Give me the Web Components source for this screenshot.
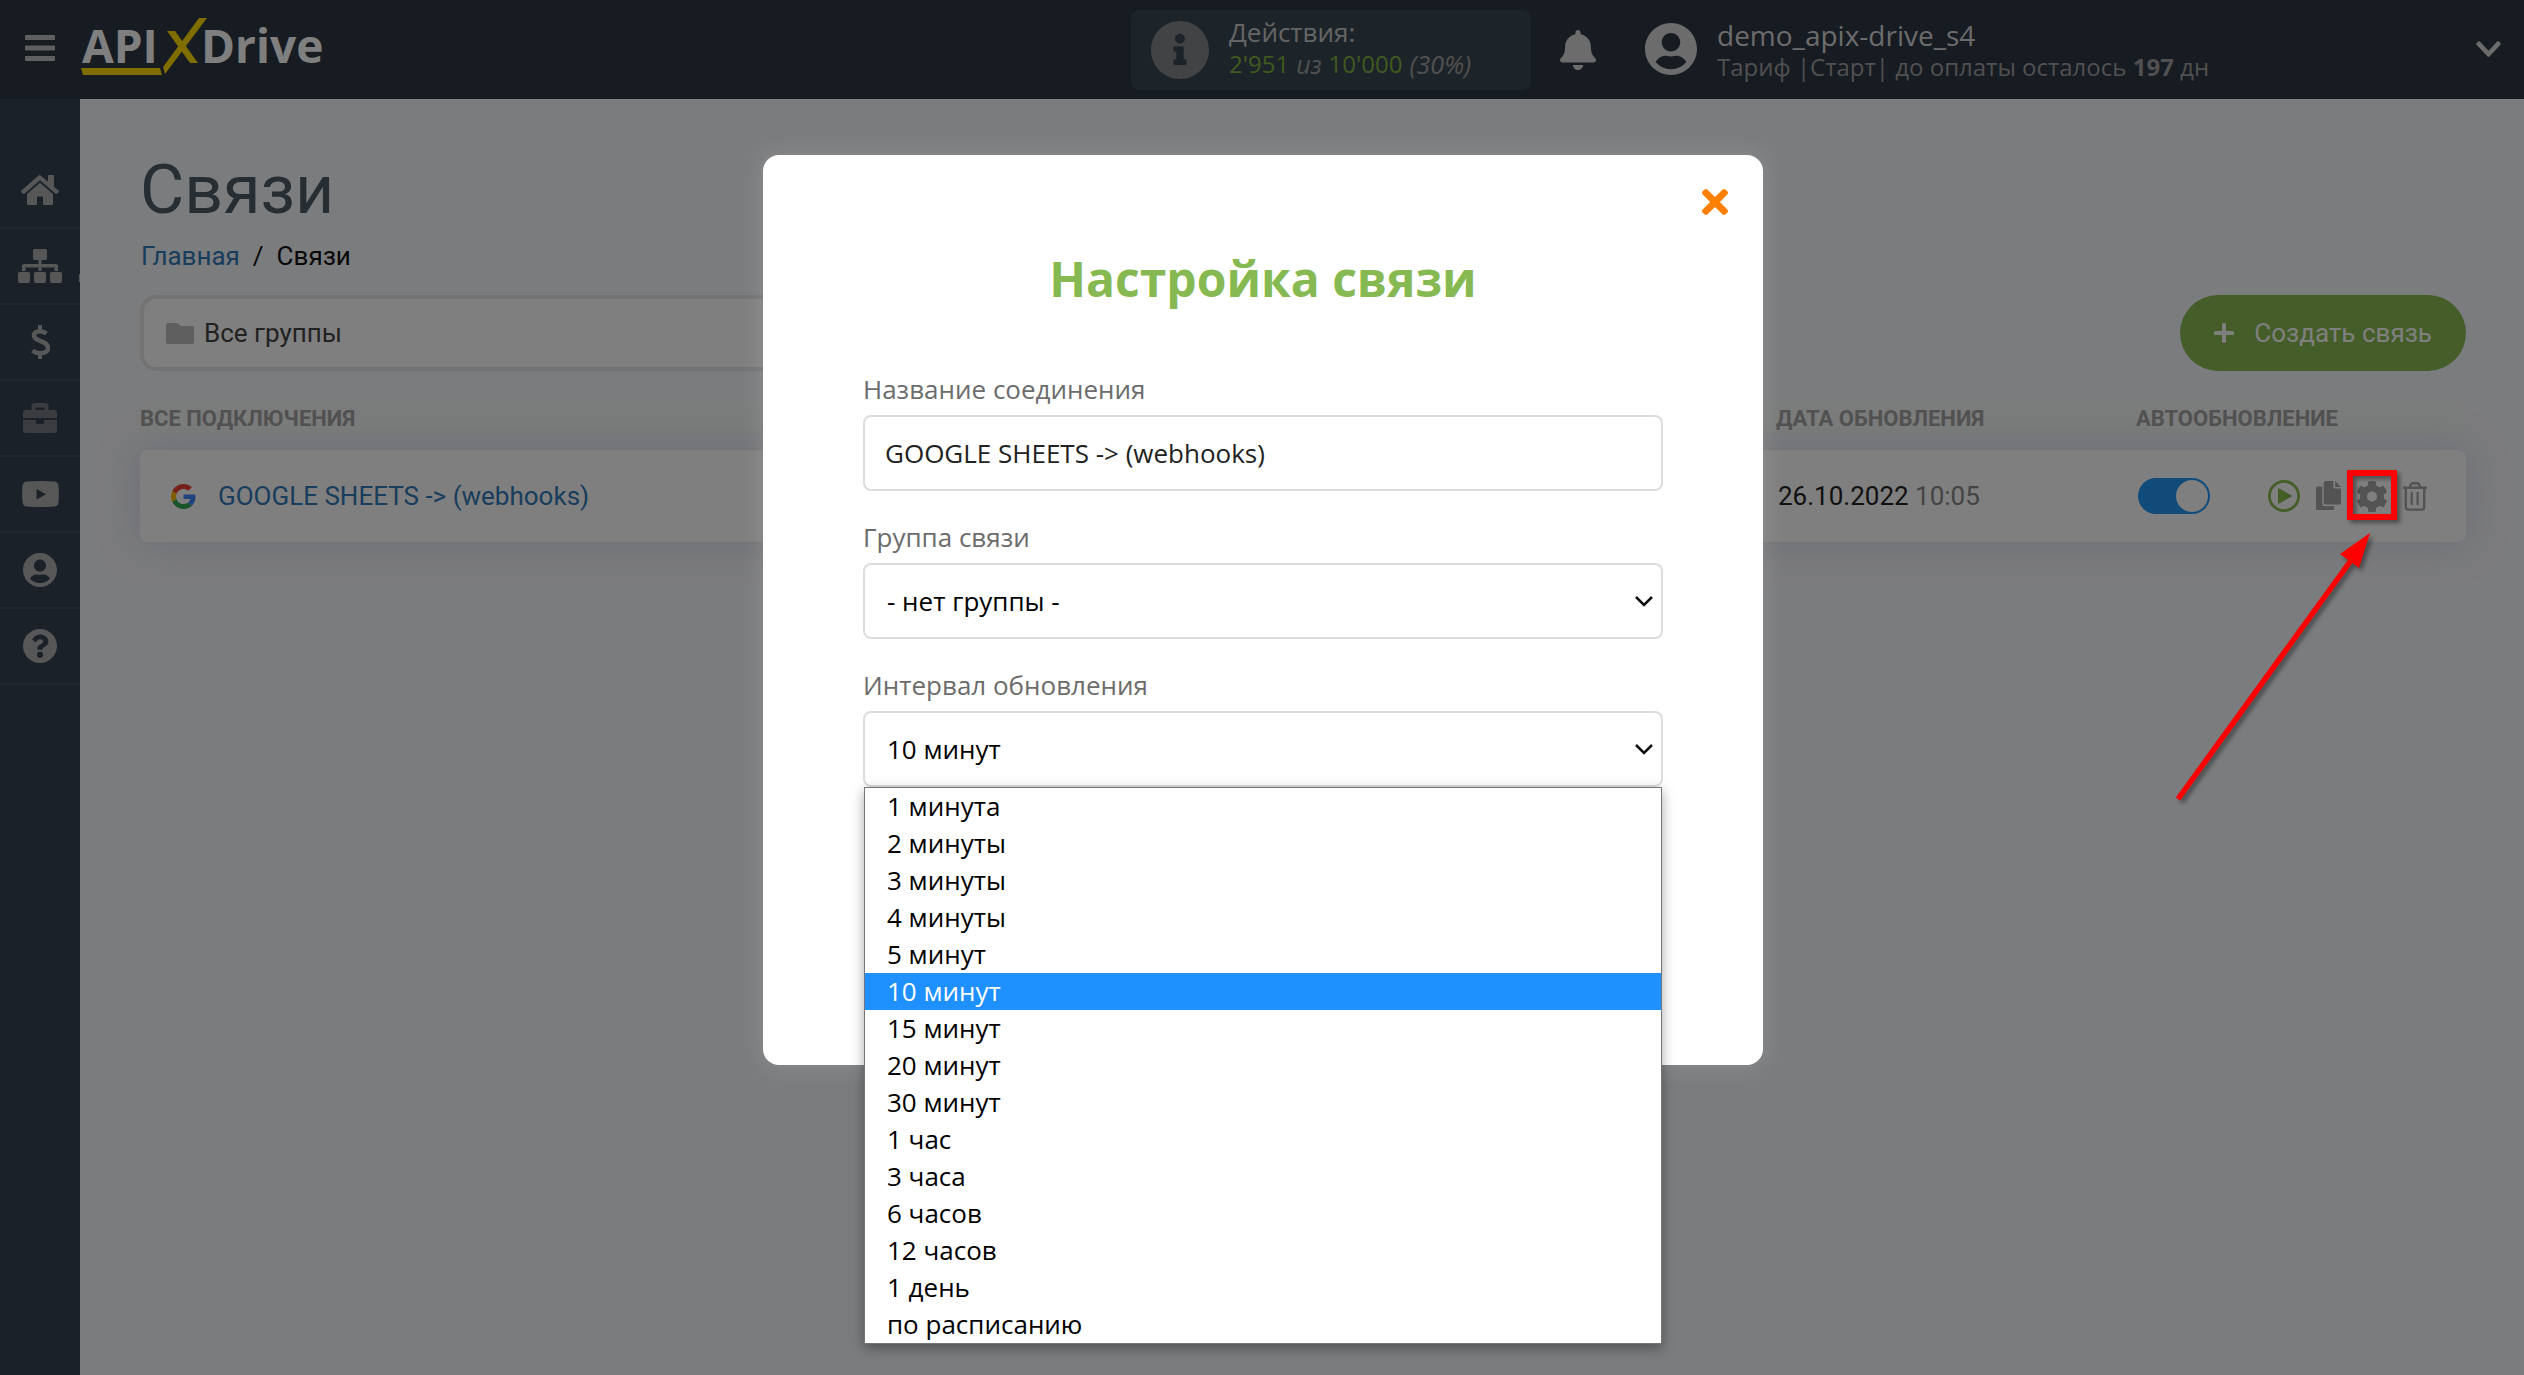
<!DOCTYPE html>
<html lang="ru">
<head>
<meta charset="utf-8">
<title>Связи — APIXDrive</title>
<style>
  html, body { margin: 0; height: 100%; }
  body { font-family: Roboto, sans-serif; background: #f7f8fc; }
</style>
</head>
<body>
<app-shell>
  <app-header slot="header"></app-header>
  <app-sidebar slot="sidebar"></app-sidebar>
  <links-page></links-page>
  <settings-modal slot="overlay"></settings-modal>
  <pointer-note slot="overlay"></pointer-note>
</app-shell>

<script>
const define = (name, html, setup) => {
  const tpl = document.createElement('template');
  tpl.innerHTML = html;
  customElements.define(name, class extends HTMLElement {
    constructor() {
      super();
      this.attachShadow({ mode: 'open' }).append(tpl.content.cloneNode(true));
      if (setup) setup(this.shadowRoot);
    }
  });
};

const ICONS = {
  burger: ['0 0 30 26', '<rect width="30" height="5" rx="1"/><rect y="10.500" width="30" height="5" rx="1"/><rect y="21" width="30" height="5" rx="1"/>'],
  home: ['0 0 38 30', '<path d="M19 0 27 6.800V1q0-1 1-1h4q1 0 1 1v11L37.600 15.600q.7.600 0 1.400l-1.600 1.800q-.6.600-1.400 0L19 5.200 3.400 18.800q-.8.600-1.400 0L.4 17q-.7-.8 0-1.400L17.600.6Q19-.6 20.400.6Z"/><path d="M19 7.800 32 19v10q0 1-1 1h-9v-8.500h-6V30H7q-1 0-1-1V19Z"/>'],
  sitemap: ['0 0 44 34', '<rect x="15" width="14" height="11" rx="2"/><rect y="23" width="12" height="11" rx="2"/><rect x="16" y="23" width="12" height="11" rx="2"/><rect x="32" y="23" width="12" height="11" rx="2"/><path d="M20.500 10h3v5H38q2 0 2 2v5h-3.500v-3.500h-13V22h-3v-3.500h-13V22H4v-5q0-2 2-2h14.500Z"/>'],
  dollar: ['0 0 20 34', '<path d="M16.500 8.500C14.500 7 12.500 6.300 10 6.300c-3.800 0-6 1.700-6 4.300 0 6.400 14 4 14 12.700 0 3-3 4.900-7.500 4.900-3.200 0-5.700-.9-8-2.700" fill="none" stroke="currentColor" stroke-width="4.600"/><path d="M8 0h4v6H8ZM8 28h4v6H8Z"/>'],
  briefcase: ['0 0 34 30', '<path fill-rule="evenodd" d="M8.500 7V3q0-3 3-3h11q3 0 3 3v4H31q3 0 3 3v5H0v-5q0-3 3-3Zm4 0h9V4.500h-9ZM0 17h13v3q0 1 1 1h6q1 0 1-1v-3h13v10q0 3-3 3H3q-3 0-3-3Z"/>'],
  video: ['0 0 37 26', '<path fill-rule="evenodd" d="M5 .5Q18.500-.5 32 .5q4 0 4.500 4.500.8 8 0 16-.5 4.500-4.500 4.500-13.500 1-27 0-4 0-4.500-4.500-.8-8 0-16Q1 .5 5 .5ZM14.500 8v10.500l9.500-5.300Z"/>'],
  user: ['0 8 496 496', '<path d="M248 8C111 8 0 119 0 256s111 248 248 248 248-111 248-248S385 8 248 8zm0 96c48.600 0 88 39.400 88 88s-39.400 88-88 88-88-39.400-88-88 39.400-88 88-88zm0 344c-58.700 0-111.300-26.600-146.500-68.200 18.800-35.400 55.600-59.800 98.500-59.800 2.400 0 4.800.4 7.100 1.100 13 4.200 26.600 6.900 40.900 6.900 14.300 0 28-2.700 40.900-6.900 2.300-.7 4.700-1.100 7.100-1.100 42.900 0 79.700 24.400 98.500 59.800C359.300 421.400 306.700 448 248 448z"/>'],
  help: ['8 8 496 496', '<path d="M504 256c0 136.997-111.043 248-248 248S8 392.997 8 256C8 119.083 119.043 8 256 8s248 111.083 248 248zM262.655 90c-54.497 0-89.255 22.957-116.549 63.758-3.536 5.286-2.353 12.415 2.715 16.258l34.699 26.310c5.205 3.947 12.621 3.008 16.665-2.122 17.864-22.658 30.113-35.797 57.303-35.797 20.429 0 45.698 13.148 45.698 32.958 0 14.976-12.363 22.667-32.534 33.976C247.128 238.528 216 254.941 216 296v4c0 6.627 5.373 12 12 12h56c6.627 0 12-5.373 12-12v-1.333c0-28.462 83.186-29.647 83.186-106.667 0-58.002-60.165-102-116.531-102zM256 338c-25.365 0-46 20.635-46 46 0 25.364 20.635 46 46 46s46-20.636 46-46c0-25.365-20.635-46-46-46z"/>'],
  info: ['8 8 496 496', '<path d="M256 8C119.043 8 8 119.083 8 256c0 136.997 111.043 248 248 248s248-111.003 248-248C504 119.083 392.957 8 256 8zm0 110c23.196 0 42 18.804 42 42s-18.804 42-42 42-42-18.804-42-42 18.804-42 42-42zm56 254c0 6.627-5.373 12-12 12h-88c-6.627 0-12-5.373-12-12v-24c0-6.627 5.373-12 12-12h12v-64h-12c-6.627 0-12-5.373-12-12v-24c0-6.627 5.373-12 12-12h64c6.627 0 12 5.373 12 12v100h12c6.627 0 12 5.373 12 12v24z"/>'],
  bell: ['0 0 448 512', '<path d="M224 512c35.320 0 63.970-28.650 63.970-64H160.030c0 35.350 28.650 64 63.970 64zm215.390-149.710c-19.320-20.760-55.470-51.990-55.470-154.290 0-77.700-54.480-139.900-127.940-155.160V32c0-17.670-14.320-32-31.980-32s-31.980 14.330-31.980 32v20.840C118.560 68.100 64.080 130.300 64.080 208c0 102.300-36.150 133.530-55.470 154.290-6 6.450-8.660 14.160-8.610 21.710.11 16.400 12.980 32 32.100 32h383.800c19.120 0 32-15.600 32.100-32 .05-7.550-2.610-15.270-8.610-21.710z"/>'],
  chevron: ['0 120 448 272', '<path d="M207.029 381.476L12.686 187.132c-9.373-9.373-9.373-24.569 0-33.941l22.667-22.667c9.357-9.357 24.522-9.375 33.901-.04L224 284.505l154.745-154.021c9.379-9.335 24.544-9.317 33.901.04l22.667 22.667c9.373 9.373 9.373 24.569 0 33.941L240.971 381.476c-9.373 9.372-24.569 9.372-33.942 0z"/>'],
  close: ['0 80 352 352', '<path d="M242.720 256l100.070-100.070c12.280-12.280 12.280-32.190 0-44.480l-22.240-22.240c-12.280-12.280-32.190-12.280-44.480 0L176 189.280 75.930 89.210c-12.280-12.280-32.190-12.280-44.480 0L9.210 111.450c-12.280 12.280-12.280 32.190 0 44.480L109.280 256 9.210 356.070c-12.280 12.280-12.280 32.190 0 44.480l22.240 22.240c12.280 12.280 32.200 12.280 44.480 0L176 322.720l100.070 100.070c12.280 12.280 32.200 12.280 44.480 0l22.240-22.240c12.280-12.280 12.280-32.190 0-44.480L242.720 256z"/>'],
  folder: ['0 0 28 21', '<path d="M2 0h9q1 0 1.600.8L15 3h11q2 0 2 2v14q0 2-2 2H2q-2 0-2-2V2Q0 0 2 0Z"/>'],
  plus: ['0 0 20 20', '<path d="M8 1.500Q8 0 9.500 0h1Q12 0 12 1.500V8h6.500Q20 8 20 9.500v1q0 1.500-1.500 1.500H12v6.500q0 1.500-1.500 1.500h-1Q8 20 8 18.500V12H1.500Q0 12 0 10.500v-1Q0 8 1.500 8H8Z"/>'],
  google: ['0 0 48 48', '<path fill="#ea4335" d="M24 9.500c3.540 0 6.710 1.220 9.210 3.600l6.850-6.850C35.900 2.380 30.470 0 24 0 14.620 0 6.510 5.380 2.560 13.220l7.980 6.190C12.430 13.720 17.740 9.500 24 9.500z"/><path fill="#4285f4" d="M46.980 24.550c0-1.570-.15-3.090-.38-4.550H24v9.020h12.940c-.58 2.960-2.260 5.480-4.780 7.180l7.730 6c4.510-4.180 7.090-10.360 7.090-17.650z"/><path fill="#fbbc05" d="M10.530 28.590c-.48-1.450-.76-2.990-.76-4.590s.27-3.140.76-4.590l-7.980-6.190C.92 16.460 0 20.120 0 24c0 3.880.92 7.540 2.560 10.780l7.970-6.190z"/><path fill="#34a853" d="M24 48c6.480 0 11.930-2.130 15.890-5.810l-7.730-6c-2.150 1.450-4.920 2.300-8.160 2.300-6.260 0-11.570-4.220-13.470-9.910l-7.980 6.190C6.510 42.620 14.620 48 24 48z"/>'],
  play: ['0 0 32 32', '<circle cx="16" cy="16" r="14.600" fill="none" stroke="currentColor" stroke-width="2.800"/><path d="M10 7.700 24.500 16 10 24.300Z"/>'],
  copy: ['0 0 26 30', '<path d="M8.500 1q0-1 1-1H18v6q0 1.500 1.500 1.500H26V22q0 1.500-1.500 1.500h-15q-1.500 0-1.500-1.500V1Z"/><path d="M20 0 26 6h-6ZM6.500 5.500V23q0 2.200 2.200 2.200H19v2.300q0 1.500-1.500 1.500h-16Q0 29 0 27.500V7q0-1.500 1.500-1.500Z"/>'],
  cog: ['16 8 480 496', '<path d="M487.400 315.700l-42.600-24.600c4.300-23.200 4.300-47 0-70.200l42.600-24.600c4.900-2.800 7.100-8.600 5.500-14-11.100-35.600-30-67.800-54.700-94.600-3.800-4.100-10-5.100-14.800-2.300L380.800 110c-17.900-15.400-38.500-27.300-60.800-35.100V25.800c0-5.600-3.900-10.500-9.400-11.700-36.700-8.200-74.300-7.800-109.200 0-5.500 1.200-9.400 6.100-9.400 11.700V75c-22.200 7.900-42.800 19.800-60.800 35.100L88.700 85.500c-4.900-2.800-11-1.900-14.800 2.300-24.700 26.700-43.600 58.900-54.700 94.600-1.700 5.400.6 11.200 5.500 14L67.300 221c-4.300 23.200-4.300 47 0 70.200l-42.600 24.600c-4.900 2.800-7.100 8.600-5.500 14 11.100 35.600 30 67.800 54.700 94.600 3.800 4.100 10 5.100 14.800 2.300l42.600-24.600c17.900 15.400 38.500 27.300 60.800 35.100v49.200c0 5.600 3.900 10.500 9.400 11.700 36.700 8.200 74.300 7.800 109.200 0 5.500-1.200 9.400-6.100 9.400-11.700v-49.200c22.200-7.900 42.800-19.800 60.800-35.100l42.600 24.600c4.900 2.800 11 1.900 14.800-2.300 24.700-26.700 43.600-58.900 54.700-94.600 1.500-5.500-.7-11.300-5.600-14.100zM256 336c-44.100 0-80-35.900-80-80s35.900-80 80-80 80 35.900 80 80-35.900 80-80 80z"/>'],
  trash: ['0 0 24 29', '<path fill="none" stroke="currentColor" stroke-width="2.400" d="M2.800 6v19.300q0 2.300 2.300 2.300h13.800q2.300 0 2.300-2.300V6M6.500 5.500 8 2.200q.5-1 1.600-1h4.800q1.100 0 1.600 1l1.500 3.300"/><path d="M0 4.600h24V7H0ZM7.600 10H9.800v13H7.600ZM13.500 10h2.200v13h-2.200Z"/>'],
};

customElements.define('ui-icon', class extends HTMLElement {
  constructor() {
    super();
    this.attachShadow({ mode: 'open' });
  }
  connectedCallback() {
    const [box, body] = ICONS[this.getAttribute('name')];
    this.shadowRoot.innerHTML = `
      <style>:host{display:block;flex:none} svg{display:block;width:100%;height:100%;fill:currentColor}</style>
      <svg viewBox="${box}" preserveAspectRatio="none" aria-hidden="true">${body}</svg>`;
  }
});

define('app-shell', `
  <style>
    :host { display: grid; grid-template: auto 1fr / 80px minmax(0, 1fr); min-height: 100vh; position: relative; overflow: hidden; }
    header { grid-column: 1 / -1; }
    aside { display: grid; background: #374251; }
  </style>
  <header><slot name="header"></slot></header>
  <aside><slot name="sidebar"></slot></aside>
  <main><slot></slot></main>
  <slot name="overlay"></slot>
`);

define('brand-logo', `
  <style>
    :host { display: block; }
    a { display: block; }
    svg { display: block; width: 250px; height: 74px; overflow: visible; }
    text { font: 700 46px "Open Sans", sans-serif; fill: #fff; }
    polygon { fill: #ffdb00; }
  </style>
  <a href="#" aria-label="APIXDrive">
    <svg viewBox="80 8 250 74">
      <text x="82" y="63">API</text>
      <text x="201" y="63">Drive</text>
      <polygon points="167,31 175,31 198,63 190,63"/>
      <polygon points="199,18 207,18 165,74 163,67"/>
      <polygon points="81,68 160,68 162,75 83,75"/>
    </svg>
  </a>
`);

define('app-header', `
  <style>
    :host { display: grid; grid-template-columns: minmax(0, 1131fr) minmax(0, 1393fr); height: 99px; background: #2e3644; color: #fff; font-family: "Open Sans", sans-serif; }
    button { all: unset; cursor: pointer; }
    .left { display: flex; align-items: center; gap: 25px; padding-left: 25px; }
    .burger { width: 30px; height: 26px; margin-bottom: 3px; color: #bebebe; }
    brand-logo { margin-bottom: 9px; }
    .right { display: flex; align-items: center; padding-right: 23px; white-space: nowrap; }
    .limits { display: flex; align-items: center; gap: 20px; box-sizing: border-box; width: 400px; height: 80px; padding: 0 20px; border-radius: 8px; background: #3b4853; color: #c9c9c9; }
    .limits ui-icon { width: 58px; height: 58px; color: #83868a; }
    .limits div { padding-bottom: 4px; }
    .limits p { margin: 0; line-height: 32px; }
    .title { font-size: 26px; }
    .usage { display: flex; gap: 7px; font-size: 24px; color: #a0a0a0; }
    .usage i { font-size: 25px; }
    .usage b { font-weight: 400; color: #7fb241; }
    .bell { margin-left: 29px; width: 36px; height: 40px; color: #d8d8d8; }
    .account { display: flex; align-items: center; flex: 1; margin-left: 49px; gap: 20px; color: #d8d8d8; }
    .avatar { width: 52px; height: 52px; margin-bottom: 2px; }
    .who { flex: 1; padding-top: 2px; line-height: 32px; }
    .login { font-size: 28px; }
    .plan { font-size: 24px; color: #a0a0a0; }
    .arrow { width: 25px; height: 16px; margin-bottom: 2px; }
  </style>
  <div class="left">
    <button aria-label="Меню"><ui-icon class="burger" name="burger"></ui-icon></button>
    <brand-logo></brand-logo>
  </div>
  <div class="right">
    <div class="limits">
      <ui-icon name="info"></ui-icon>
      <div>
        <p class="title">Действия:</p>
        <p class="usage"><b>2'951</b> <i>из</i> <b>10'000</b> <i>(30%)</i></p>
      </div>
    </div>
    <button aria-label="Уведомления"><ui-icon class="bell" name="bell"></ui-icon></button>
    <div class="account">
      <ui-icon class="avatar" name="user"></ui-icon>
      <div class="who">
        <div class="login">demo_apix-drive_s4</div>
        <div class="plan">Тариф |Старт| до оплаты осталось <strong>197</strong> дн</div>
      </div>
      <button aria-label="Профиль"><ui-icon class="arrow" name="chevron"></ui-icon></button>
    </div>
  </div>
`);

define('app-sidebar', `
  <style>
    :host { display: block; padding-top: 54px; color: #aeafb1; }
    a { display: grid; place-items: center; height: 74px; border-bottom: 2px solid #454a5a; color: inherit; position: relative; }
    .dim { color: #74787e; }
    .current::after { content: ""; position: absolute; right: 0; top: 45px; width: 1px; height: 8px; background: #b0b1b3; }
  </style>
  <nav>
    <a href="#" aria-label="Главная"><ui-icon name="home" style="width:38px;height:30px"></ui-icon></a>
    <a href="#" aria-label="Связи" class="current"><ui-icon name="sitemap" style="width:44px;height:34px"></ui-icon></a>
    <a href="#" aria-label="Оплата"><ui-icon name="dollar" style="width:20px;height:34px"></ui-icon></a>
    <a href="#" aria-label="Проекты" class="dim"><ui-icon name="briefcase" style="width:34px;height:30px"></ui-icon></a>
    <a href="#" aria-label="Видео"><ui-icon name="video" style="width:37px;height:26px"></ui-icon></a>
    <a href="#" aria-label="Профиль"><ui-icon name="user" style="width:34px;height:34px"></ui-icon></a>
    <a href="#" aria-label="Помощь"><ui-icon name="help" style="width:34px;height:34px"></ui-icon></a>
  </nav>
`);

define('toggle-switch', `
  <style>
    :host { display: block; padding-left: 2px; }
    input { appearance: none; display: block; margin: 0; width: 72px; height: 36px; border-radius: 18px; padding: 2px; background: #2196f3; box-sizing: border-box; }
    input::before { content: ""; display: block; width: 32px; height: 32px; border-radius: 50%; background: #fff; margin-left: auto; }
  </style>
  <input type="checkbox" role="switch" checked aria-label="Автообновление">
`);

define('links-page', `
  <style>
    :host { display: block; padding: 51px 58px 0 60px; font-size: 26px; line-height: 30px; color: #222; }
    h1 { margin: 0; font-weight: 400; font-size: 68px; line-height: 80px; color: #4d5c66; }
    a { color: #337ab7; text-decoration: none; }
    button { all: unset; cursor: pointer; display: block; }
    .crumbs { display: flex; gap: 13px; margin-top: 11px; padding-left: 1px; color: #111; }
    .toolbar { display: flex; justify-content: space-between; margin-top: 24px; }
    .group { display: flex; align-items: center; gap: 10px; box-sizing: border-box; width: 30%; height: 76px; padding: 0 22px; background: #fff; border: 4px solid #e6e6e6; border-radius: 16px; color: #444; }
    .group ui-icon { width: 28px; height: 21px; color: #bebebe; }
    .create { display: flex; align-items: center; gap: 20px; height: 76px; padding: 0 34px; border-radius: 38px; background: #8aba52; color: #fff; }
    .create ui-icon { width: 20px; height: 20px; }
    table { width: 100%; margin-top: 33px; border-collapse: separate; border-spacing: 0; table-layout: fixed; }
    th { padding: 0; height: 30px; text-align: left; font-weight: 700; font-size: 22px; line-height: 30px; color: #a3a3a3; background: #f6f8f7; }
    .gap td { height: 16px; padding: 0; }
    .row { border-radius: 8px; box-shadow: 0 0 40px rgba(160, 165, 190, .35); }
    .row td { height: 92px; padding: 0; background: #fff; }
    .row td:first-child { border-radius: 8px 0 0 8px; }
    .row td:last-child { border-radius: 0 8px 8px 0; }
    .name { display: flex; align-items: center; gap: 22px; padding-left: 31px; }
    .name ui-icon { width: 25px; height: 25px; }
    .date { color: #222; padding-left: 2px; }
    .date span { color: #888; }
    .actions { display: flex; align-items: center; gap: 16px; color: #a6a6a6; }
    .play { color: #8aba52; }
  </style>
  <h1>Связи</h1>
  <nav class="crumbs"><a href="#">Главная</a><span>/</span><span>Связи</span></nav>
  <div class="toolbar">
    <button class="group"><ui-icon name="folder"></ui-icon><span>Все группы</span></button>
    <button class="create"><ui-icon name="plus"></ui-icon><span>Создать связь</span></button>
  </div>
  <table>
    <colgroup><col><col style="width:360px"><col style="width:132px"><col style="width:198px"></colgroup>
    <thead><tr><th>ВСЕ ПОДКЛЮЧЕНИЯ</th><th>ДАТА ОБНОВЛЕНИЯ</th><th colspan="2">АВТООБНОВЛЕНИЕ</th></tr></thead>
    <tbody>
      <tr class="gap"><td colspan="4"></td></tr>
      <tr class="row">
        <td><div class="name"><ui-icon name="google"></ui-icon><a href="#">GOOGLE SHEETS -&gt; (webhooks)</a></div></td>
        <td><div class="date">26.10.2022 <span>10:05</span></div></td>
        <td><toggle-switch></toggle-switch></td>
        <td><div class="actions">
          <button class="play" aria-label="Запустить"><ui-icon name="play" style="width:32px;height:32px"></ui-icon></button>
          <button aria-label="Копировать"><ui-icon name="copy" style="width:25px;height:30px"></ui-icon></button>
          <button aria-label="Настройки"><ui-icon name="cog" style="width:30px;height:31px"></ui-icon></button>
          <button aria-label="Удалить"><ui-icon name="trash" style="width:24px;height:29px"></ui-icon></button>
        </div></td>
      </tr>
    </tbody>
  </table>
`);

define('form-field', `
  <style>
    :host { display: block; position: relative; }
    :host(:not(:last-child)) { margin-bottom: 28px; }
    ::slotted(label) { display: block; margin-bottom: 8px; line-height: 36px; color: #6c6c6c; }
    .box { position: relative; }
    ::slotted(input), ::slotted(select) { display: block; box-sizing: border-box; width: 100%; height: 76px; border: 2px solid #dcdcdc; border-radius: 8px; background: #fff; font: inherit; color: #222; outline: 0; appearance: none; }
    ::slotted(input) { padding: 0 20px; }
    ::slotted(select) { padding: 0 22px; color: #000; }
    svg { display: none; position: absolute; right: 9px; top: 32px; width: 20px; height: 12px; pointer-events: none; }
    :host([dropdown]) svg { display: block; }
  </style>
  <slot name="label"></slot>
  <div class="box">
    <slot></slot>
    <svg viewBox="0 0 20 12"><path d="M2 2l8 8 8-8" fill="none" stroke="#111" stroke-width="2.500"/></svg>
  </div>
`);

define('option-list', `
  <style>
    :host { display: block; position: absolute; z-index: 2; top: 100%; left: 1px; right: 1px; background: #fff; border: 1px solid #767676; box-shadow: 0 4px 12px rgba(0, 0, 0, .35); }
    ul { list-style: none; margin: 0; padding: 0; }
    li { height: 37px; line-height: 36px; padding: 0 22px; color: #000; }
    li[aria-selected="true"] { background: #1e90ff; color: #fff; }
  </style>
  <ul role="listbox" aria-label="Интервал обновления"></ul>
`);

const INTERVALS = ['1 минута', '2 минуты', '3 минуты', '4 минуты', '5 минут', '10 минут', '15 минут', '20 минут', '30 минут', '1 час', '3 часа', '6 часов', '12 часов', '1 день', 'по расписанию'];

define('settings-modal', `
  <style>
    :host { display: flex; justify-content: center; align-items: flex-start; position: absolute; inset: 0; z-index: 5; padding: 155px 0 0 2px; background: rgba(0, 0, 0, .5); font: 26px "Open Sans", sans-serif; }
    section { position: relative; box-sizing: border-box; width: 1000px; max-width: 100%; min-height: 910px; padding: 91px 100px 100px; border-radius: 16px; background: #fff; box-shadow: 0 0 24px rgba(255, 255, 255, .15); }
    h2 { margin: 0 0 60px; text-align: center; font-size: 48px; line-height: 65px; font-weight: 700; color: #86b951; }
    button { all: unset; cursor: pointer; position: absolute; top: 34px; right: 35px; color: #ff8000; }
    button ui-icon { width: 26px; height: 26px; }
  </style>
  <section role="dialog" aria-labelledby="title">
    <button aria-label="Закрыть"><ui-icon name="close"></ui-icon></button>
    <h2 id="title">Настройка связи</h2>
    <form-field>
      <label slot="label" for="name">Название соединения</label>
      <input id="name" value="GOOGLE SHEETS -&gt; (webhooks)">
    </form-field>
    <form-field dropdown>
      <label slot="label" for="group">Группа связи</label>
      <select id="group"><option>- нет группы -</option></select>
    </form-field>
    <form-field dropdown>
      <label slot="label" for="interval">Интервал обновления</label>
      <select id="interval"></select>
      <option-list></option-list>
    </form-field>
  </section>
`, root => {
  const select = root.querySelector('#interval');
  INTERVALS.forEach(t => select.add(new Option(t, t, false, t === '10 минут')));
  customElements.upgrade(root);
  const list = root.querySelector('option-list').shadowRoot.querySelector('ul');
  INTERVALS.forEach(t => {
    const li = document.createElement('li');
    li.setAttribute('role', 'option');
    li.setAttribute('aria-selected', String(t === '10 минут'));
    li.textContent = t;
    list.append(li);
  });
});

define('pointer-note', `
  <style>
    :host { display: block; position: absolute; z-index: 6; top: 470px; right: 127px; pointer-events: none; }
    svg { display: block; width: 224px; height: 340px; overflow: visible; filter: drop-shadow(3px 3px 2px rgba(0, 0, 0, .4)); }
  </style>
  <svg viewBox="2173 470 224 340">
    <rect x="2350" y="473" width="44" height="44" fill="none" stroke="#f00" stroke-width="6"/>
    <path d="M2178 799 2352 559" stroke="#f00" stroke-width="5.500" fill="none"/>
    <path d="M2370 533 2340 554 2359 568Z" fill="#f00"/>
  </svg>
`);
</script>
</body>
</html>
